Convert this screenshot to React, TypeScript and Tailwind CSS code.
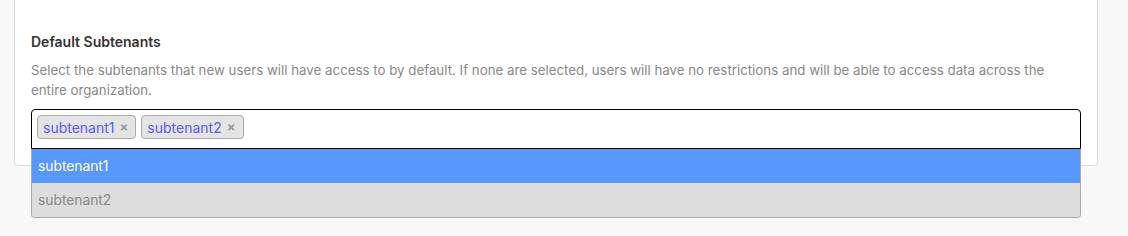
import React from "react";

function Tag({ label }: { label: string }) {
  return (
    <span className="flex h-[24px] items-center gap-[5px] rounded-[4px] border border-[#aaaaaa] bg-[#e4e4e4] pl-[5px] pr-[7px] text-[14px] text-[#5a5af5]">
      <span>{label}</span>
      <span className="text-[13px] font-bold leading-none text-[#999999]">×</span>
    </span>
  );
}

export default function App() {
  return (
    <div className="relative h-[236px] w-[1128px] overflow-hidden bg-[#f8f8f8] font-['Inter',sans-serif]">
      <div className="absolute left-[14px] top-[-20px] h-[186px] w-[1084px] rounded-b-[4px] border border-[#dddddd] bg-white" />
      <div className="relative px-[31px] pt-[33px]">
        <div className="text-[14px] font-semibold leading-[18px] text-[#333333]">Default Subtenants</div>
        <p className="mt-[9px] w-[1030px] text-[13.3px] leading-[20px] text-[#888888]">
          Select the subtenants that new users will have access to by default. If none are selected, users will have no restrictions and will be able to access data across the entire organization.
        </p>
        <div className="mt-[9px] w-[1050px]">
          <div className="flex h-[40px] items-start gap-[5px] rounded-t-[4px] border border-black bg-white px-[5px] pt-[5px]">
            <Tag label="subtenant1" />
            <Tag label="subtenant2" />
          </div>
          <div className="overflow-hidden rounded-b-[4px] border-x border-b border-[#aaaaaa]">
            <div className="flex h-[34px] items-center bg-[#5897fb] px-[6px] text-[13.8px] text-white">subtenant1</div>
            <div className="flex h-[34px] items-center bg-[#dddddd] px-[6px] text-[13.8px] text-[#888888]">subtenant2</div>
          </div>
        </div>
      </div>
    </div>
  );
}
